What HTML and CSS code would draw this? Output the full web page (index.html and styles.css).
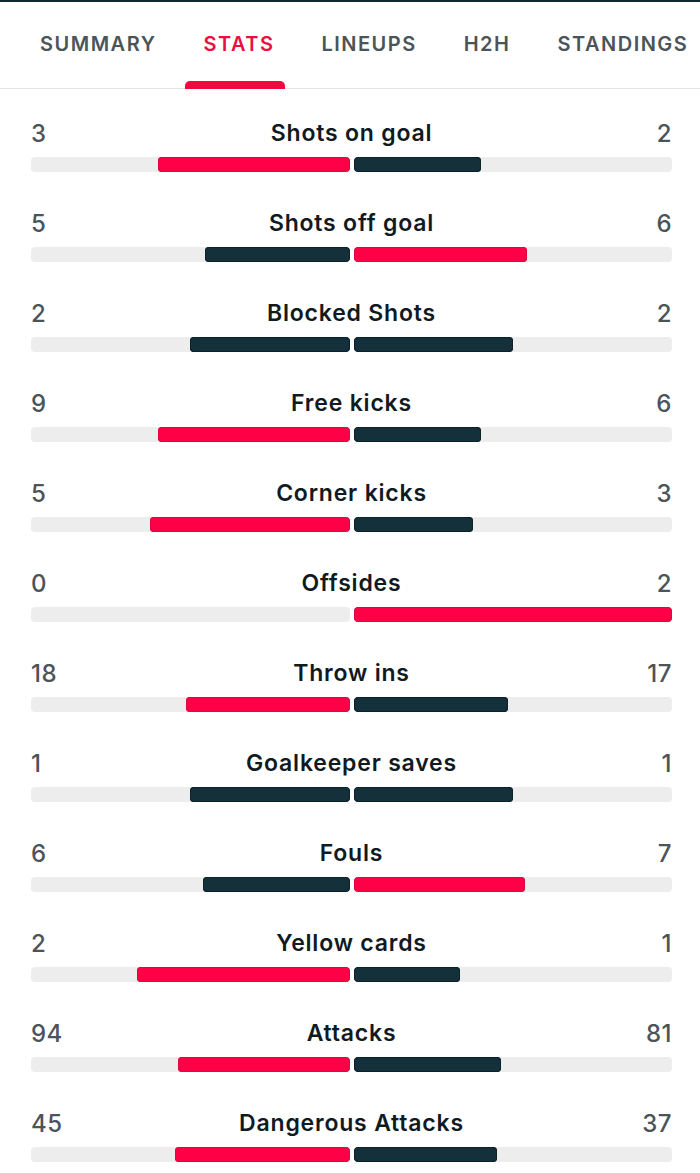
FILE: index.html
```html
<!DOCTYPE html>
<html>
<head>
<meta charset="utf-8">
<link rel="stylesheet" href="styles.css">
</head>
<body>
<div class="topline"></div>
<nav class="tabs">
  <div class="tab">SUMMARY</div>
  <div class="tab active">STATS</div>
  <div class="tab">LINEUPS</div>
  <div class="tab">H2H</div>
  <div class="tab">STANDINGS</div>
</nav>
<main class="stats">
  <div class="stat">
    <div class="head"><span class="num">3</span><span class="label">Shots on goal</span><span class="num">2</span></div>
    <div class="bars"><div class="half left"><div class="fill red" style="width:60%"></div></div><div class="half right"><div class="fill dark" style="width:40%"></div></div></div>
  </div>
  <div class="stat">
    <div class="head"><span class="num">5</span><span class="label">Shots off goal</span><span class="num">6</span></div>
    <div class="bars"><div class="half left"><div class="fill dark" style="width:45.45%"></div></div><div class="half right"><div class="fill red" style="width:54.55%"></div></div></div>
  </div>
  <div class="stat">
    <div class="head"><span class="num">2</span><span class="label">Blocked Shots</span><span class="num">2</span></div>
    <div class="bars"><div class="half left"><div class="fill dark" style="width:50%"></div></div><div class="half right"><div class="fill dark" style="width:50%"></div></div></div>
  </div>
  <div class="stat">
    <div class="head"><span class="num">9</span><span class="label">Free kicks</span><span class="num">6</span></div>
    <div class="bars"><div class="half left"><div class="fill red" style="width:60%"></div></div><div class="half right"><div class="fill dark" style="width:40%"></div></div></div>
  </div>
  <div class="stat">
    <div class="head"><span class="num">5</span><span class="label">Corner kicks</span><span class="num">3</span></div>
    <div class="bars"><div class="half left"><div class="fill red" style="width:62.5%"></div></div><div class="half right"><div class="fill dark" style="width:37.5%"></div></div></div>
  </div>
  <div class="stat">
    <div class="head"><span class="num">0</span><span class="label">Offsides</span><span class="num">2</span></div>
    <div class="bars"><div class="half left"></div><div class="half right"><div class="fill red" style="width:100%"></div></div></div>
  </div>
  <div class="stat">
    <div class="head"><span class="num">18</span><span class="label">Throw ins</span><span class="num">17</span></div>
    <div class="bars"><div class="half left"><div class="fill red" style="width:51.43%"></div></div><div class="half right"><div class="fill dark" style="width:48.57%"></div></div></div>
  </div>
  <div class="stat">
    <div class="head"><span class="num">1</span><span class="label">Goalkeeper saves</span><span class="num">1</span></div>
    <div class="bars"><div class="half left"><div class="fill dark" style="width:50%"></div></div><div class="half right"><div class="fill dark" style="width:50%"></div></div></div>
  </div>
  <div class="stat">
    <div class="head"><span class="num">6</span><span class="label">Fouls</span><span class="num">7</span></div>
    <div class="bars"><div class="half left"><div class="fill dark" style="width:46.15%"></div></div><div class="half right"><div class="fill red" style="width:53.85%"></div></div></div>
  </div>
  <div class="stat">
    <div class="head"><span class="num">2</span><span class="label">Yellow cards</span><span class="num">1</span></div>
    <div class="bars"><div class="half left"><div class="fill red" style="width:66.67%"></div></div><div class="half right"><div class="fill dark" style="width:33.33%"></div></div></div>
  </div>
  <div class="stat">
    <div class="head"><span class="num">94</span><span class="label">Attacks</span><span class="num">81</span></div>
    <div class="bars"><div class="half left"><div class="fill red" style="width:53.71%"></div></div><div class="half right"><div class="fill dark" style="width:46.29%"></div></div></div>
  </div>
  <div class="stat">
    <div class="head"><span class="num">45</span><span class="label">Dangerous Attacks</span><span class="num">37</span></div>
    <div class="bars"><div class="half left"><div class="fill red" style="width:54.88%"></div></div><div class="half right"><div class="fill dark" style="width:45.12%"></div></div></div>
  </div>
</main>
</body>
</html>
```
FILE: styles.css
```css
* { box-sizing: border-box; }
html, body { margin: 0; padding: 0; background: #ffffff; }
body {
  font-family: Inter, "Noto Sans", "Liberation Sans", sans-serif;
  color: #12181c;
  width: 700px;
  height: 1173px;
  overflow: hidden;
}
.topline { height: 2px; background: #0f2a35; }
.tabs {
  display: flex;
  gap: 47px;
  padding-left: 40px;
  height: 87px;
  border-bottom: 1px solid #e4e4e4;
  align-items: stretch;
}
.tab {
  position: relative;
  display: flex;
  align-items: center;
  padding-bottom: 2px;
  font-size: 20px;
  font-weight: 600;
  letter-spacing: 1.5px;
  color: #4b5459;
  white-space: nowrap;
}
.tab.active { color: #e8103f; }
.tab.active::after {
  content: "";
  position: absolute;
  left: -18px;
  right: -11px;
  bottom: -1px;
  height: 8px;
  background: #f0083e;
  border-radius: 5px 5px 0 0;
}
.stats { padding: 29px 28px 0 31px; }
.stat { margin-bottom: 36px; }
.head {
  display: flex;
  justify-content: space-between;
  align-items: center;
  height: 30px;
}
.num {
  font-size: 24px;
  font-weight: 500;
  color: #4b5459;
  min-width: 40px;
  letter-spacing: 0.5px;
}
.num:last-child { text-align: right; }
.label {
  font-size: 23px;
  font-weight: 600;
  color: #111a1f;
  letter-spacing: 0.8px;
}
.bars {
  display: flex;
  gap: 4px;
  height: 15px;
  margin-top: 9px;
}
.half {
  flex: 1;
  display: flex;
  background: #ededed;
  border-radius: 4px;
  overflow: hidden;
}
.half.left { justify-content: flex-end; }
.half.right { justify-content: flex-start; }
.fill { height: 100%; border-radius: 4px; }
.fill.red { background: #ff0046; box-shadow: inset 0 0 0 1px #e0073f; }
.fill.dark { background: #14303b; box-shadow: inset 0 0 0 1px #0c222b; }
```
